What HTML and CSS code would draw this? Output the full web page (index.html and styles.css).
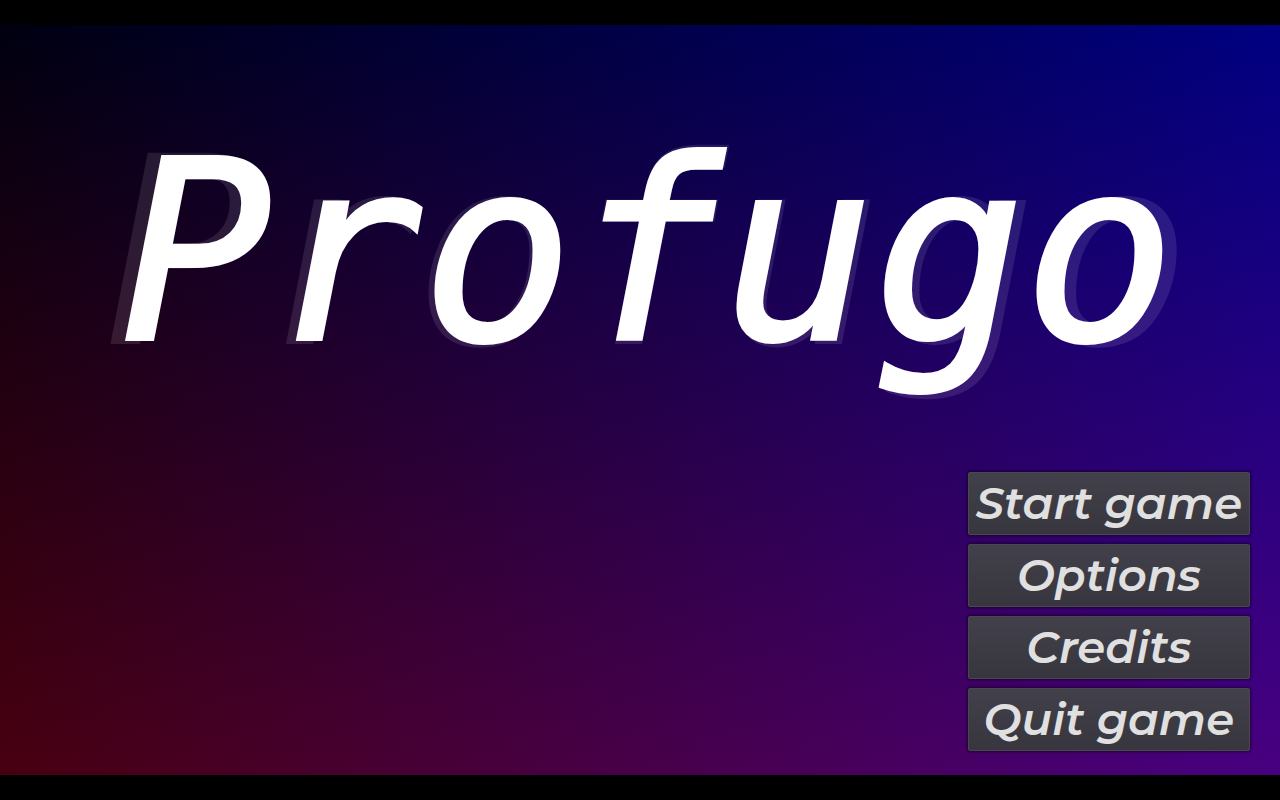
FILE: index.html
```html
<!DOCTYPE html>
<html lang="en">
<head>
  <meta charset="UTF-8">
  <meta name="viewport" content="width=device-width, initial-scale=1.0">
  <title>Profugo</title>
  <link rel="stylesheet" href="styles.css">
</head>
<body>
  <main class="screen">
    <h1 class="title" data-text="Profugo">Profugo</h1>

    <nav class="menu">
      <button type="button" class="menu-button">Start game</button>
      <button type="button" class="menu-button">Options</button>
      <button type="button" class="menu-button">Credits</button>
      <button type="button" class="menu-button">Quit game</button>
    </nav>
  </main>
</body>
</html>
```

FILE: styles.css
```css
* {
  box-sizing: border-box;
}

body {
  display: flex;
  flex-direction: column;
  min-height: 100vh;
  margin: 0;
  padding: 25px 0;
  background: #000;
}

/* red grows downwards, blue grows to the right */
.screen {
  flex: 1;
  display: flex;
  flex-direction: column;
  justify-content: space-between;
  padding: 78px 30px 24px;
  overflow: hidden;
  background-image:
    linear-gradient(to bottom, #000010, #480010),
    linear-gradient(to right, #000, #000078);
  background-blend-mode: screen;
}

.title {
  isolation: isolate;
  display: grid;
  justify-content: center;
  margin: 0;
  padding-left: 16px;
  font-family: "DejaVu Sans Mono", monospace;
  font-size: 250px;
  font-style: oblique;
  font-weight: 400;
  line-height: 300px;
  color: #fff;
  -webkit-text-stroke: 4px #fff;
}

/* bigger faint copy behind the title */
.title::before {
  content: attr(data-text);
  position: absolute;
  z-index: -1;
  justify-self: center;
  font-size: 257px;
  opacity: 0.1;
}

.menu {
  align-self: flex-end;
  display: grid;
  gap: 9px;
}

.menu-button {
  height: 63px;
  padding: 0 7px 2px;
  border: 1px solid #4a484f;
  border-radius: 2px;
  background: linear-gradient(#42404a, #37353d);
  box-shadow: 0 0 3px 1px rgba(0, 0, 0, 0.5);
  color: #e0e0e0;
  font-family: Montserrat, Inter, sans-serif;
  font-size: 45px;
  font-style: italic;
  font-weight: 600;
  line-height: 56px;
  cursor: pointer;
}

.menu-button:hover {
  background: linear-gradient(#4c4a55, #403e47);
}
```
